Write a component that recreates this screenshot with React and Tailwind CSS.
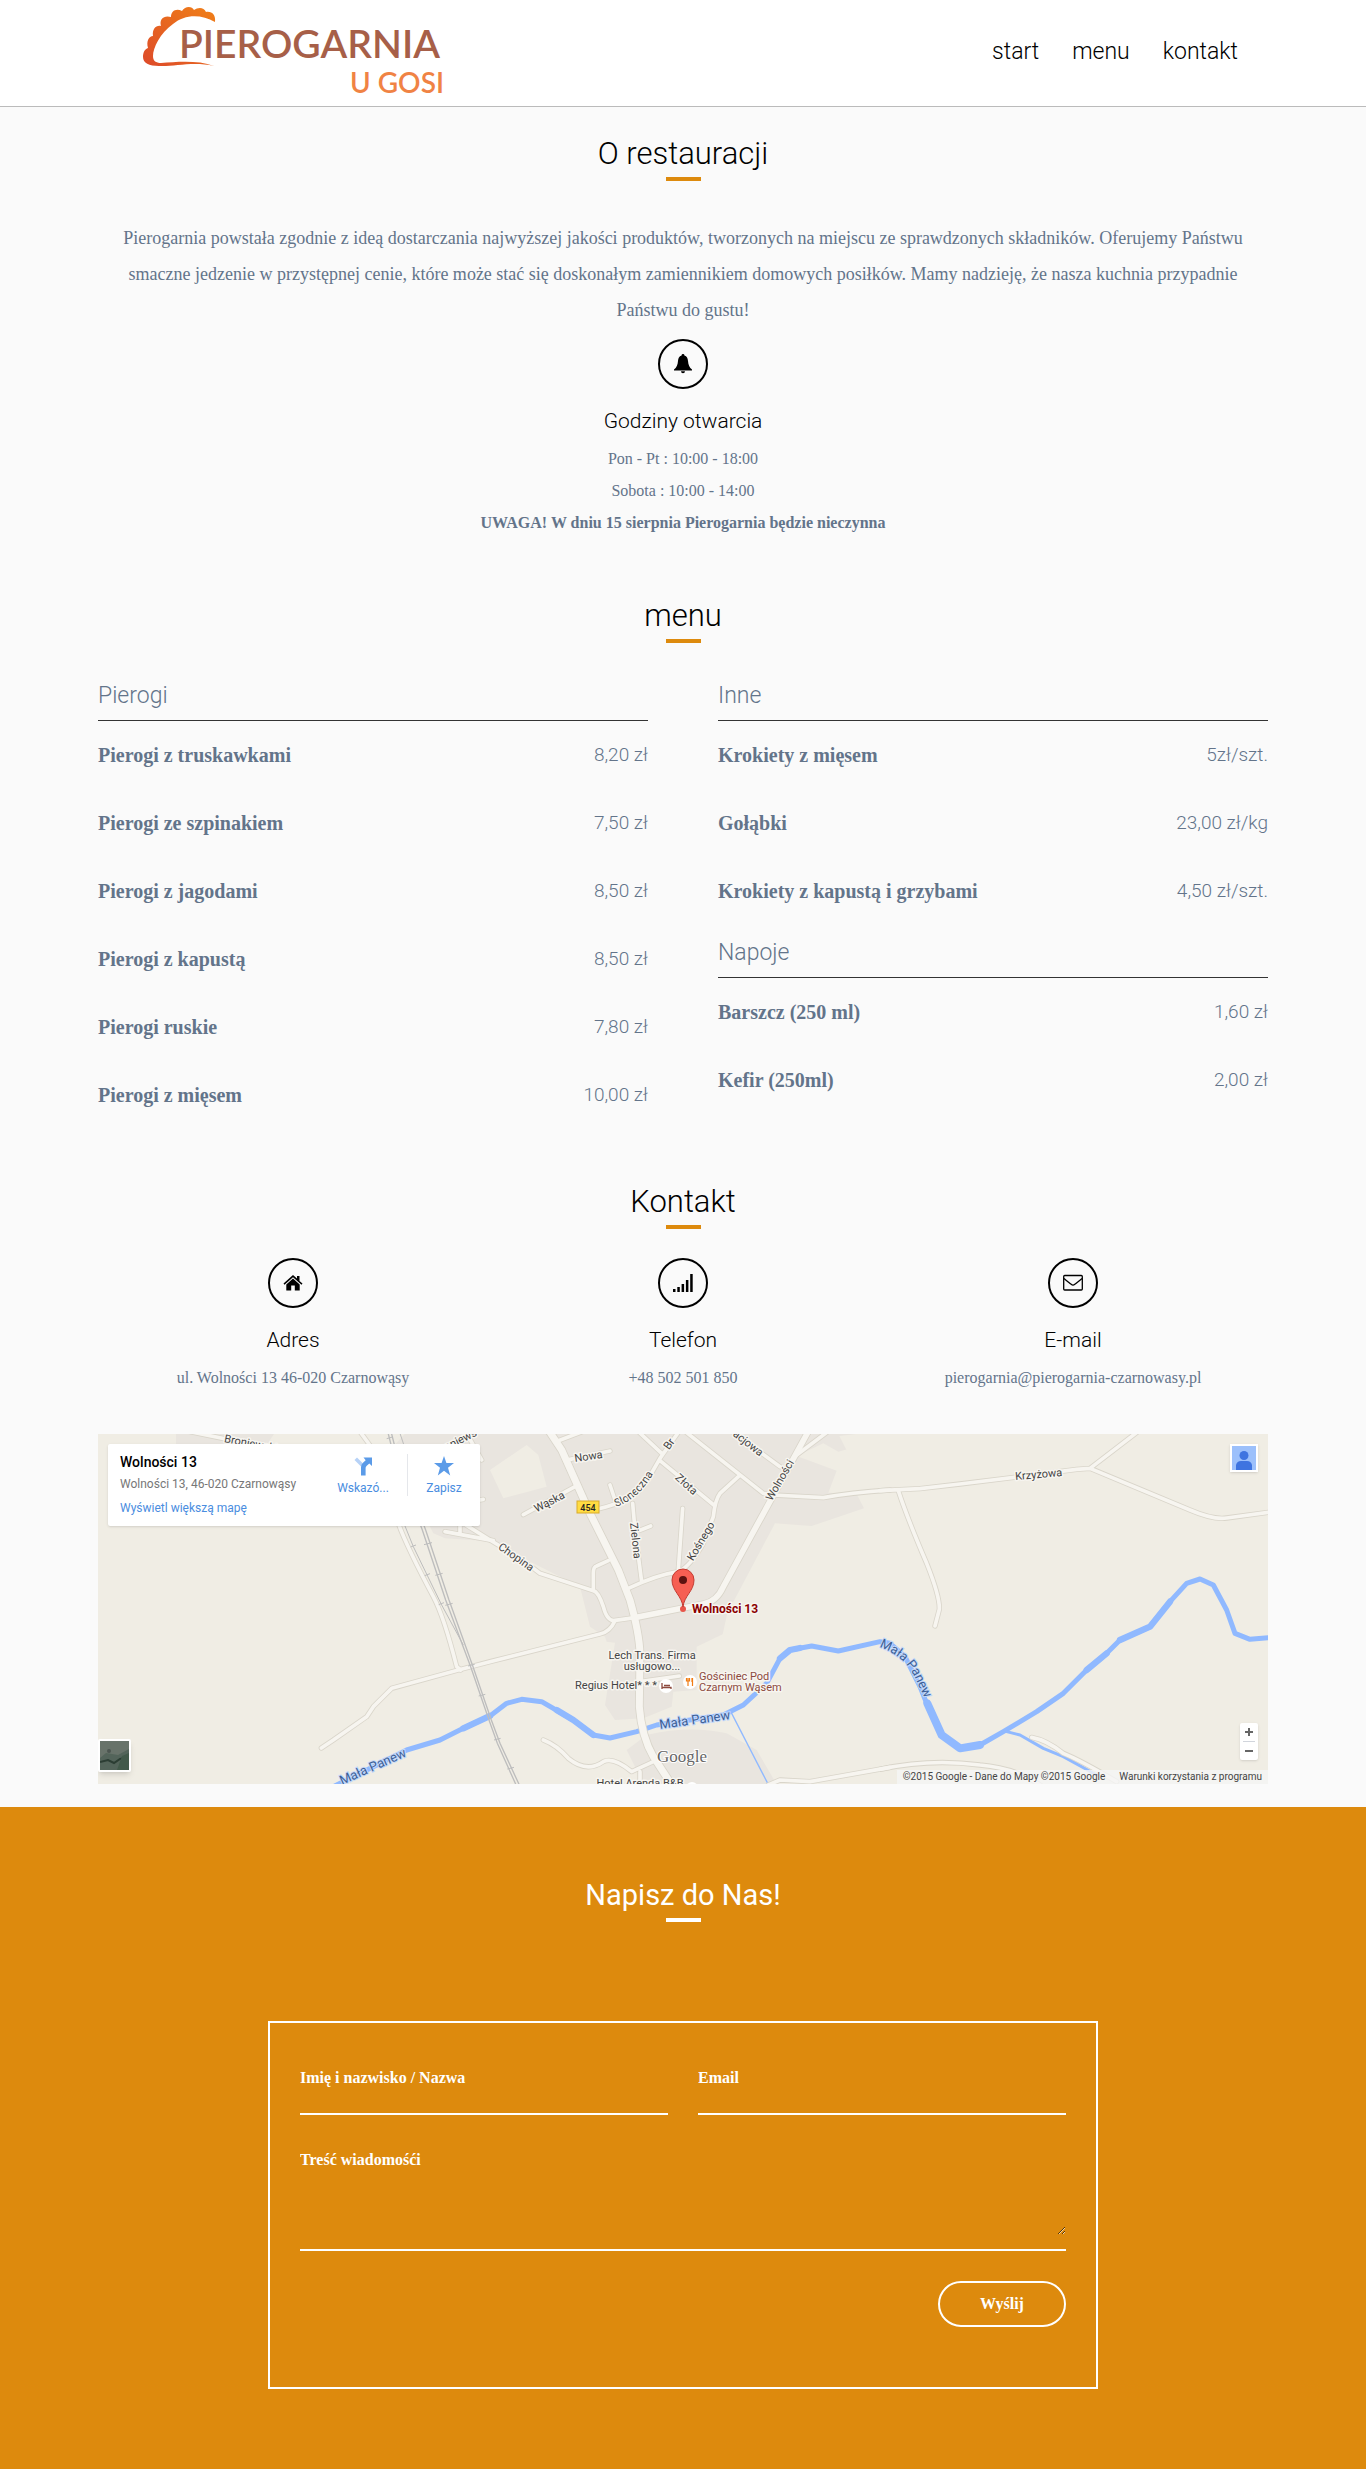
import React from "react";

const display = "font-['Roboto',sans-serif] font-light";

function Logo() {
  return (
    <svg viewBox="0 0 304 92" className="h-[92px] w-[304px]" role="img" aria-label="Pierogarnia u Gosi">
      <defs>
        <linearGradient id="dough" x1="0" y1="1" x2="1" y2="0">
          <stop offset="0" stopColor="#dd4a2a" />
          <stop offset="1" stopColor="#f08018" />
        </linearGradient>
      </defs>
      <path
        fill="url(#dough)"
        d="M71 61 C50 56 30 62 16 61 C6 61 0 58 0 52 C0 47 2 44 5 43 C3 36 6 31 10 31 C9 24 13 20 18 21 C16 14 21 10 28 12 C28 6 33 3 39 6 C42 1 49 1 51 5 C55 2 61 2 63 7 C69 6 73 10 72 17 C58 9 42 9 30 19 C17 28 10 43 10 51 C10 56 13 58 18 58 C34 57 55 55 71 61 Z"
      />
      <text x="36" y="53" fontFamily="Lato, sans-serif" fontSize="39" fontWeight="600" fill="#a75f48">PIEROGARNIA</text>
      <text x="301" y="88" textAnchor="end" fontFamily="Lato, sans-serif" fontSize="28" fontWeight="600" fill="#f08344">U GOSI</text>
    </svg>
  );
}

function Heading({ children, light }) {
  return (
    <div className="flex flex-col items-center">
      <h2 className={light ? "font-['Roboto',sans-serif] text-[29px] leading-10 font-normal text-white" : `${display} text-[31px] leading-10 text-black`}>{children}</h2>
      <div className={`mt-[3px] h-1 w-[35px] ${light ? "bg-white" : "bg-[#dd8a0d]"}`} />
    </div>
  );
}

function Info({ icon, title, children }) {
  return (
    <div className="flex flex-col items-center text-center">
      <div className="flex size-[50px] items-center justify-center rounded-full border-2 border-black text-black">{icon}</div>
      <h3 className={`${display} mt-4 text-[21px] leading-8 text-black`}>{title}</h3>
      <div className="mt-[6px] text-base leading-8">{children}</div>
    </div>
  );
}

const BellIcon = () => (
  <svg viewBox="0 0 20 20" className="size-5" fill="currentColor" aria-hidden="true">
    <path d="M10 0 a1.4 1.4 0 0 1 1.4 1.5 C14 2.200 14.700 4 15 7 C15.300 11 16.500 13.500 19 15.500 V16.500 H1 V15.500 C3.500 13.500 4.700 11 5 7 C5.300 4 6 2.200 8.600 1.500 A1.400 1.400 0 0 1 10 0 Z M8 17.200 h4 a2 2 0 0 1 -4 0 Z" />
  </svg>
);
const HomeIcon = () => (
  <svg viewBox="0 0 20 20" className="size-5" fill="currentColor" aria-hidden="true">
    <path d="M10 2 L14 5.600 V3 H16.500 V8 L19.500 10.600 L18.500 11.800 L10 4.300 L1.500 11.800 L0.500 10.600 Z" />
    <path d="M10 5.600 L16.700 11.500 V17.500 H11.800 V12.500 H8.200 V17.500 H3.300 V11.500 Z" />
  </svg>
);
const SignalIcon = () => (
  <svg viewBox="0 0 20 20" className="size-5" fill="currentColor" aria-hidden="true">
    <path d="M0 16h2.500v3H0z M4.300 14h2.500v5H4.300z M8.600 11h2.500v8H8.600z M12.900 7h2.500v12h-2.500z M17.200 1h2.500v18h-2.500z" />
  </svg>
);
const MailIcon = () => (
  <svg viewBox="0 0 20 20" className="size-5" fill="none" stroke="currentColor" strokeWidth="1.300" strokeLinejoin="round" aria-hidden="true">
    <rect x="0.700" y="2.500" width="18.600" height="14.500" rx="1" />
    <path d="M1 5.500 C4 8 6 9.500 8.200 11.300 Q10 12.800 11.800 11.300 C14 9.500 16 8 19 5.500" />
  </svg>
);

const menuLeft = [
  {
    name: "Pierogi",
    items: [
      ["Pierogi z truskawkami", "8,20 zł"],
      ["Pierogi ze szpinakiem", "7,50 zł"],
      ["Pierogi z jagodami", "8,50 zł"],
      ["Pierogi z kapustą", "8,50 zł"],
      ["Pierogi ruskie", "7,80 zł"],
      ["Pierogi z mięsem", "10,00 zł"],
    ],
  },
];
const menuRight = [
  {
    name: "Inne",
    items: [
      ["Krokiety z mięsem", "5zł/szt."],
      ["Gołąbki", "23,00 zł/kg"],
      ["Krokiety z kapustą i grzybami", "4,50 zł/szt."],
    ],
  },
  {
    name: "Napoje",
    items: [
      ["Barszcz (250 ml)", "1,60 zł"],
      ["Kefir (250ml)", "2,00 zł"],
    ],
  },
];

function MenuColumn({ groups }) {
  return (
    <div className="flex flex-col gap-3">
      {groups.map((g) => (
        <section key={g.name}>
          <h3 className={`${display} border-b border-[#333] pb-2 text-[23px] leading-8`}>{g.name}</h3>
          <ul>
            {g.items.map(([name, price]) => (
              <li key={name} className="flex h-[68px] items-center justify-between">
                <span className="text-xl font-bold">{name}</span>
                <span className={`${display} text-[19px]`}>{price}</span>
              </li>
            ))}
          </ul>
        </section>
      ))}
    </div>
  );
}

// Road geometry, grouped by map tile; every tile has its own x offset.
const roads = [
  { x: 0, w: 11, d: "M300 35 L520 80 M810 35 L850 90 M1130 40 L1175 120 M925 310 Q950 380 1030 530 Q1062 590 1100 740 L1112 750 M1065 335 L1210 362 M1110 290 L1110 340 M1120 310 L1200 360 M1140 245 L1180 238" },
  {
    x: 1200,
    w: 11,
    d: "M205 62 L290 30 M240 118 L360 93 M255 200 L100 284 M320 268 Q440 240 470 185 L510 115 L570 30 M440 30 L515 100 M510 122 L675 258 M360 195 L375 240 M428 250 L435 330 L455 485 M452 330 L482 318 M578 265 L565 450 M415 505 Q500 465 565 455 Q600 440 640 370 L670 290 Q675 240 690 220 L745 170 M580 30 L820 220 L850 225 L1000 233 Q1080 218 1200 210 M720 30 L870 140 M920 105 L1020 30 M440 592 L370 602 Q350 600 340 560 Q325 515 310 512 L150 460 Q100 420 0 360 M355 422 L320 438 Q310 440 310 460 L310 510 M375 602 Q360 635 330 642 L0 725 L-95 750 L-295 805 L-350 860 L-370 890 L-470 960 L-506 984 M160 960 Q200 975 235 1015 Q290 1060 340 1025 Q370 1010 425 1055 L490 1025 M450 1055 V1105 M450 785 L568 768 M835 1095 L870 1080 L960 1085 L1200 1042",
  },
  { x: 1200, w: 17, d: "M960 25 L700 500 Q680 545 640 552 L440 592" },
  { x: 1200, w: 21, d: "M172 25 L215 90 L300 280 L385 450 L420 540 Q448 640 450 700 L448 860 Q455 950 490 1010 L555 1110" },
  { x: 2370, w: 11, d: "M0 212 L120 206 L240 192 L420 170 L590 148 L630 145 L780 30 M630 145 L930 270 Q1000 300 1040 294 L1180 275 M55 212 Q80 290 140 430 Q180 530 178 568 L165 618 M0 1048 Q150 1015 300 1035 Q420 1045 500 1110 M455 952 Q500 960 550 1000 Q600 1020 710 1085" },
];

function RoadLayer({ extra, color }) {
  return roads.map((r, i) => (
    <path key={i} d={r.d} transform={`translate(${r.x} 0)`} fill="none" stroke={color} strokeWidth={r.w + extra} strokeLinecap="round" strokeLinejoin="round" />
  ));
}

const streets = [
  ["Nowa", 491, 26, -8], ["Wąska", 453, 71, -27], ["Złota", 586, 53, 42], ["Br", 574, 12, -55],
  ["acjowa", 648, 12, 38], ["Wolności", 685, 48, -60], ["Zielona", 534, 107, 84], ["Kośnego", 606, 109, -59],
  ["Chopina", 416, 126, 35], ["Krzyżowa", 941, 44, -5], ["Broniewski", 152, 13, 11], ["oniews", 364, 9, -26],
];

function MapArt() {
  return (
    <svg viewBox="0 0 1170 350" preserveAspectRatio="xMidYMid slice" className="block h-full w-full" fontFamily="Roboto, sans-serif" aria-hidden="true">
      <rect width="1170" height="350" fill="#f0ede4" />
      <g transform="translate(-8 -14) scale(0.33333)">
        <g fill="#e9e5df">
          <path d="M258 30 L258 72 L520 90 L560 30 Z" />
          <path transform="translate(1200 0)" d="M-245 30 L-300 90 L-170 340 L-135 355 L0 364 L270 500 L300 620 L345 650 L350 665 L375 668 L345 855 L375 900 L460 895 L545 860 L550 815 L620 810 L620 680 L698 643 L712 580 L855 310 L965 318 L1122 265 L1100 222 L1015 218 L1040 152 L920 108 L1000 70 L1045 95 L1200 50 L1200 30 Z" />
          <path transform="translate(1200 0)" d="M410 990 L470 945 Q600 915 710 940 L800 990 L870 1110 L470 1110 Z" />
        </g>
        <g fill="#f0ede4" transform="translate(1200 0)">
          <path d="M0 150 L110 75 L145 105 L170 200 L40 235 Z" />
          <path d="M1048 48 L1200 30 L1200 60 L1072 95 Z" />
        </g>
        <g fill="none" stroke="#90b9ff" strokeLinejoin="round" strokeLinecap="round">
          <path strokeWidth="15" d="M720 1105 L850 1040 L950 990 L1050 960 L1120 925 L1200 888 L1250 850 L1295 838 L1355 845 L1450 900 L1510 945 L1560 954 L1640 935 L1700 915 L1800 900 L1900 885 L1960 855 L2030 790 L2070 715 L2100 690 L2165 678 L2245 693 L2370 665 L2400 670 L2445 710 L2490 800 L2510 850 L2555 945 L2610 985 L2670 975 L2740 935 L2840 875 L2920 820 L2990 750 L3050 700 L3090 660 L3180 620 L3240 545 L3290 490 L3330 477 L3370 495 L3410 570 L3435 640 L3480 658 L3550 652" />
          <path strokeWidth="19" d="M1120 925 L1200 888 M1400 870 L1450 900 L1510 945 M2070 715 L2100 690 L2130 684 M2990 750 L3050 700 M3090 660 L3180 620 L3240 545" />
          <path strokeWidth="24" d="M2512 850 L2555 945 L2610 985 L2670 975" />
          <path strokeWidth="4" d="M1925 880 L2032 1088" />
          <path strokeWidth="9" d="M2750 935 L2790 945 L2860 985 L2920 1010 L3020 1065" />
        </g>
        <RoadLayer extra={5} color="#d9d5ca" />
        <RoadLayer extra={0} color="#f7f5f0" />
        <g fill="none" stroke="#bdbdbd" strokeWidth="4">
          <path d="M892 30 L907 90 L997 330 L1067 540 L1142 740 L1197 900 L1222 970 L1285 1110 M902 30 L917 90 L1007 330 L1077 540 L1149 740 L1204 900 L1230 970 L1295 1110" />
          <path strokeWidth="3" d="M930 40 L950 100 M945 318 L970 380 L1055 555 L1120 675" />
          <path strokeWidth="3" d="M890 56 l18 -5 M1002 374 l24 -6 M1036 466 l22 -6 M1066 556 l22 -6 M1134 738 l20 -5 M1166 828 l20 -5 M1212 960 l20 -5 M1252 1047 l20 -5 M962 381 l16 -6 M1004 467 l16 -6 M1046 554 l16 -6" />
        </g>
      </g>
      <g fontSize="11" fill="#444" stroke="#f7f5f0" strokeWidth="3" paintOrder="stroke" strokeLinejoin="round" textAnchor="middle">
        {streets.map(([t, x, y, r]) => (
          <text key={t} x={x} y={y} transform={`rotate(${r} ${x} ${y})`}>{t}</text>
        ))}
        <path id="sloneczna" d="M518 73 Q542 65 558 35" fill="none" stroke="none" />
        <text textAnchor="start"><textPath href="#sloneczna">Słoneczna</textPath></text>
        <text x="554" y="225">Lech Trans. Firma</text>
        <text x="554" y="236">usługowo...</text>
        <text x="518" y="255">Regius Hotel* * *</text>
        <text x="542" y="353">Hotel Arenda B&amp;B</text>
        <g textAnchor="start" fill="#8d4a3e">
          <text x="601" y="246">Gościniec Pod</text>
          <text x="601" y="257">Czarnym Wąsem</text>
        </g>
        <text x="594" y="179" textAnchor="start" fontSize="12" fontWeight="700" fill="#8b0000">Wolności 13</text>
      </g>
      <g fontSize="13" fill="#3c5f96" stroke="#c3d8fb" strokeWidth="2" paintOrder="stroke">
        <text x="244" y="351" transform="rotate(-24 244 351)">Mała Panew</text>
        <text x="562" y="295" transform="rotate(-8 562 295)">Mała Panew</text>
        <path id="river-east" d="M781 213 Q806 222 816 242 L834 280" fill="none" stroke="none" />
        <text><textPath href="#river-east">Mała Panew</textPath></text>
      </g>
      <text x="559" y="328" fontFamily="Liberation Serif, serif" fontSize="17" fill="#666" stroke="#fff" strokeWidth="2" paintOrder="stroke">Google</text>
      <rect x="479" y="67" width="22" height="12" fill="#ffdc42" stroke="#d9ab2c" />
      <text x="490" y="77" fontSize="9" fontWeight="500" fill="#222" textAnchor="middle">454</text>
      <circle cx="568" cy="252" r="7" fill="#fff" />
      <path d="M564 249 v6 M564 253.500 h9 v1.500 M566 251.500 h6" stroke="#8d4a3e" strokeWidth="1.300" fill="none" />
      <circle cx="592" cy="248" r="7" fill="#fff" />
      <path d="M590 244 v8 M588.500 244 v3 h3 v-3 M594.500 244 v8 M594 244 v4" stroke="#f07c14" strokeWidth="1.200" fill="none" />
      <circle cx="594" cy="354" r="6" fill="#fff" />
      <circle cx="585" cy="175" r="3" fill="#e8554a" />
      <path d="M585 173 C584 162 574 157 574 146 A11 11 0 0 1 596 146 C596 157 586 162 585 173 Z" fill="#f65f53" stroke="#c33b31" />
      <circle cx="585" cy="146" r="4" fill="#5c1210" />
    </svg>
  );
}

function MapCard() {
  return (
    <div className="absolute left-[10px] top-[10px] flex h-[82px] w-[372px] max-w-[80%] rounded-xs bg-white pl-3 shadow">
      <div className="flex-1 pt-2">
        <p className="text-sm leading-5 font-medium text-black">Wolności 13</p>
        <p className="text-xs leading-6 text-[#777]">Wolności 13, 46-020 Czarnowąsy</p>
        <a href="#mapa" className="block text-xs leading-6 text-[#4a8de0]">Wyświetl większą mapę</a>
      </div>
      <div className="mt-[10px] flex h-[42px]">
        <a href="#trasa" className="flex w-[88px] flex-col items-center text-xs leading-5 text-[#4a8de0]">
          <svg viewBox="0 0 20 20" className="mt-[2px] size-5 shrink-0" aria-hidden="true">
            <path d="M1.500 4 L4 1.500 L10 7.500 L8 10.500 Z" fill="#b7d2f7" />
            <path d="M8 19.500 V11 Q8 8.500 10 6.700 L12.700 4.200 L10.500 1.500 H19 V10 L16.300 7.500 L13.500 10 Q12.600 11 12.600 12 V19.500 Z" fill="#5b9be8" />
          </svg>
          <span className="mt-[2px]">Wskazó...</span>
        </a>
        <div className="h-full w-px bg-gray-200" />
        <a href="#zapisz" className="flex w-[72px] flex-col items-center text-xs leading-5 text-[#4a8de0]">
          <svg viewBox="0 0 20 20" className="mt-[2px] size-5 shrink-0" fill="#5b9be8" aria-hidden="true">
            <path d="M10 0 L12.400 7 H20 L14 11.700 L16.200 19.500 L10 14.800 L3.800 19.500 L6 11.700 L0 7 H7.600 Z" />
          </svg>
          <span className="mt-[2px]">Zapisz</span>
        </a>
      </div>
    </div>
  );
}

function Map() {
  return (
    <div id="mapa" className="relative mt-10 h-[350px] overflow-hidden font-['Roboto',sans-serif]">
      <MapArt />
      <MapCard />
      <div className="absolute right-[10px] top-[10px] size-7 border-2 border-white bg-[#9cc0fb] shadow">
        <svg viewBox="0 0 24 24" className="size-full" fill="#3f74e0" aria-hidden="true">
          <circle cx="12" cy="9.500" r="4.500" />
          <path d="M4 24 V19 Q5 15 9 15 H15 Q19 15 20 19 V24 Z" />
        </svg>
      </div>
      <div className="absolute bottom-3 left-0 size-[33px] rounded-xs border-2 border-white shadow-md">
        <svg viewBox="0 0 29 29" className="size-full" aria-hidden="true">
          <rect width="29" height="29" fill="#53645a" />
          <path d="M0 0 H29 V8 L18 14 L6 12 L0 17 Z" fill="#68736a" />
          <path d="M0 21 L8 19 L14 22 L20 18 L29 16" fill="none" stroke="#2b3d33" strokeWidth="2" />
          <path d="M17 29 L22 15 L29 12 V29 Z" fill="#42594a" />
          <circle cx="9" cy="10" r="2" fill="#4b5550" />
        </svg>
      </div>
      <div className="absolute bottom-6 right-[10px] flex w-[18px] flex-col items-center rounded-xs bg-white text-[#666] shadow">
        <button type="button" aria-label="Powiększ" className="flex h-[18px] w-full items-center justify-center">
          <svg viewBox="0 0 8 8" className="size-2" stroke="currentColor" strokeWidth="2"><path d="M4 0v8M0 4h8" /></svg>
        </button>
        <div className="h-px w-3 bg-gray-300" />
        <button type="button" aria-label="Pomniejsz" className="flex h-[18px] w-full items-center justify-center">
          <svg viewBox="0 0 8 8" className="size-2" stroke="currentColor" strokeWidth="2"><path d="M0 4h8" /></svg>
        </button>
      </div>
      <div className="absolute bottom-0 right-0 flex gap-[14px] bg-[#f5f5f5]/80 px-[6px] text-[10px] leading-[14px] text-[#444]">
        <span>©2015 Google - Dane do Mapy ©2015 Google</span>
        <a href="#warunki">Warunki korzystania z programu</a>
      </div>
    </div>
  );
}

const field = "w-full bg-transparent text-base font-bold text-white placeholder:text-white placeholder:opacity-100 focus:outline-none";

export default function App() {
  return (
    <div className="bg-[#fafafa] font-['Liberation_Serif',serif] text-[#63748a]">
      <header className="border-b border-[#bbb] bg-white">
        <div className="mx-auto flex h-[106px] max-w-[1170px] items-center justify-between pr-[30px] pl-[45px]">
          <a href="#start" className="mb-1 block"><Logo /></a>
          <nav className={`${display} mb-[2px] flex gap-[33px] text-[23px] leading-8 text-black`}>
            <a href="#start">start</a>
            <a href="#menu">menu</a>
            <a href="#kontakt">kontakt</a>
          </nav>
        </div>
      </header>

      <main className="mx-auto max-w-[1170px] pb-[23px]">
        <section id="start" className="pt-[27px]">
          <Heading>O restauracji</Heading>
          <p className="mt-[39px] mb-[11px] text-center text-lg leading-9">
            Pierogarnia powstała zgodnie z ideą dostarczania najwyższej jakości produktów, tworzonych na miejscu ze
            sprawdzonych składników. Oferujemy Państwu smaczne jedzenie w przystępnej cenie, które może stać się
            doskonałym zamiennikiem domowych posiłków. Mamy nadzieję, że nasza kuchnia przypadnie Państwu do gustu!
          </p>
          <Info icon={<BellIcon />} title="Godziny otwarcia">
            <p>Pon - Pt : 10:00 - 18:00</p>
            <p>Sobota : 10:00 - 14:00</p>
            <p className="font-bold">UWAGA! W dniu 15 sierpnia Pierogarnia będzie nieczynna</p>
          </Info>
        </section>

        <section id="menu" className="pt-[57px]">
          <Heading>menu</Heading>
          <div className="mt-[37px] grid grid-cols-2 gap-[70px]">
            <MenuColumn groups={menuLeft} />
            <MenuColumn groups={menuRight} />
          </div>
        </section>

        <section id="kontakt" className="pt-[53px]">
          <Heading>Kontakt</Heading>
          <div className="mt-[29px] grid grid-cols-3">
            <Info icon={<HomeIcon />} title="Adres">ul. Wolności 13 46-020 Czarnowąsy</Info>
            <Info icon={<SignalIcon />} title="Telefon">+48 502 501 850</Info>
            <Info icon={<MailIcon />} title="E-mail">pierogarnia@pierogarnia-czarnowasy.pl</Info>
          </div>
          <Map />
        </section>
      </main>

      <section className="bg-[#dd8a0d] px-4 pt-[68px] pb-20">
        <Heading light>Napisz do Nas!</Heading>
        <form onSubmit={(e) => e.preventDefault()} className="mx-auto mt-[99px] max-w-[830px] border-2 border-white px-[30px] pt-8 pb-[60px] text-white">
          <div className="grid grid-cols-2 gap-[30px]">
            <input type="text" aria-label="Imię i nazwisko / Nazwa" placeholder="Imię i nazwisko / Nazwa" className={`${field} h-[60px] border-b-2 border-white pb-3`} />
            <input type="email" aria-label="Email" placeholder="Email" className={`${field} h-[60px] border-b-2 border-white pb-3`} />
          </div>
          <div className="mt-5 border-b-2 border-white pb-[14px]">
            <textarea aria-label="Treść wiadomośći" placeholder="Treść wiadomośći" className={`${field} block h-[100px] resize pt-[13px]`} />
          </div>
          <div className="mt-[30px] flex justify-end">
            <button type="submit" className="h-[46px] w-32 rounded-full border-2 border-white text-base font-bold">Wyślij</button>
          </div>
        </form>
      </section>
    </div>
  );
}
